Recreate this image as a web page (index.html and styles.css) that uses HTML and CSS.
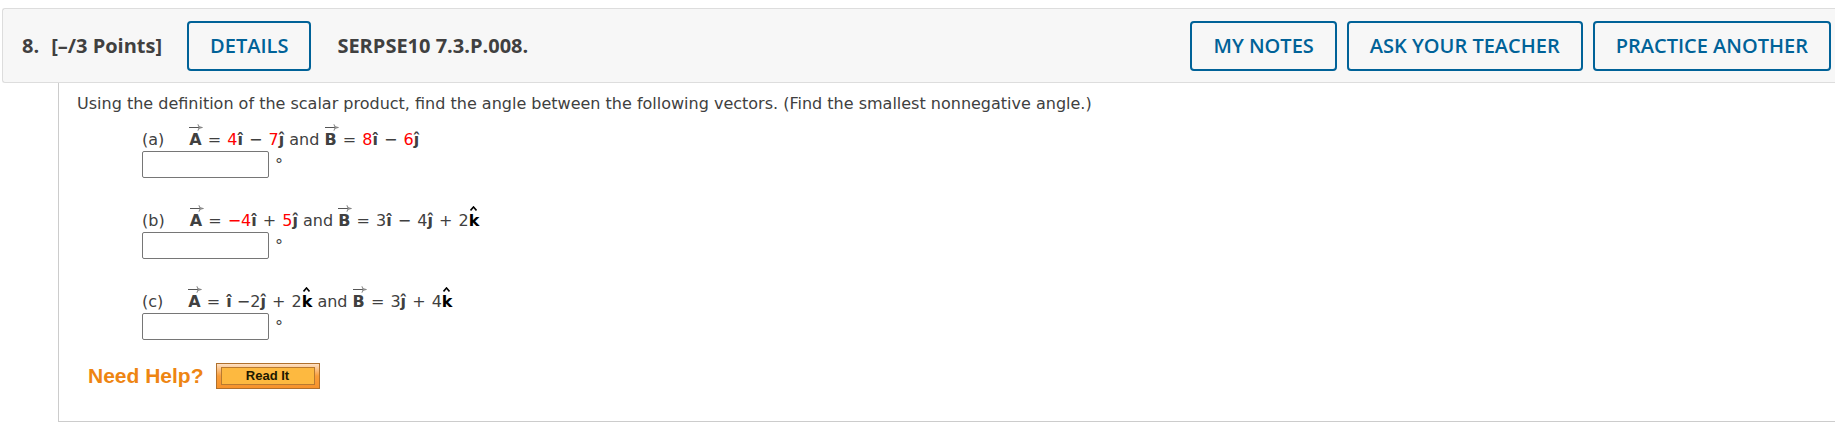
FILE: index.html
```
<!DOCTYPE html>
<html lang="en">
<head>
    <meta charset="UTF-8">
    <meta name="viewport" content="width=device-width, initial-scale=1.0">
    <title>SERPSE10 7.3.P.008.</title>
    <link rel="stylesheet" href="styles.css">
</head>
<body>
    <svg class="symbols" aria-hidden="true">
        <symbol id="arrow" viewBox="0 0 14 7">
            <path d="M0 3.5H13" fill="none" stroke="#555" stroke-width="1"/>
            <path d="M9 0.5C9.5 2 11 3.2 13.5 3.5C11 3.8 9.5 5 9 6.5L10 3.5Z" fill="#999" stroke="#888" stroke-width="0.8"/>
        </symbol>
        <symbol id="hat" viewBox="0 0 7 5">
            <path d="M0.5 4.5L3.5 1L6.5 4.5" fill="none" stroke="#000" stroke-width="1.6"/>
        </symbol>
    </svg>

    <div class="question">
        <header class="header">
            <h2 class="title"><span>8.</span> <span>[–/3 Points]</span></h2>
            <button type="button" class="btn">DETAILS</button>
            <h2 class="title code">SERPSE10 7.3.P.008.</h2>
            <div class="actions">
                <button type="button" class="btn">MY NOTES</button>
                <button type="button" class="btn">ASK YOUR TEACHER</button>
                <button type="button" class="btn">PRACTICE ANOTHER</button>
            </div>
        </header>

        <main class="content">
            <p class="prompt">Using the definition of the scalar product, find the angle between the following vectors. (Find the smallest nonnegative angle.)</p>

            <div class="parts">
                <div class="part">
                    <label for="part-a"><span class="letter">(a)</span><b class="vec">A<svg><use href="#arrow"/></svg></b> <span class="op">=</span> <span class="red">4</span><b>î</b> <span class="op">−</span> <span class="red">7</span><b>ĵ</b> and <b class="vec">B<svg><use href="#arrow"/></svg></b> <span class="op">=</span> <span class="red">8</span><b>î</b> <span class="op">−</span> <span class="red">6</span><b>ĵ</b></label>
                    <div class="answer"><input type="text" id="part-a"><span class="degree">°</span></div>
                </div>
                <div class="part">
                    <label for="part-b"><span class="letter">(b)</span><b class="vec">A<svg><use href="#arrow"/></svg></b> <span class="op">=</span> <span class="red">−4</span><b>î</b> <span class="op">+</span> <span class="red">5</span><b>ĵ</b> and <b class="vec">B<svg><use href="#arrow"/></svg></b> <span class="op">=</span> 3<b>î</b> <span class="op">−</span> 4<b>ĵ</b> <span class="op">+</span> 2<b class="unit">k<svg><use href="#hat"/></svg></b></label>
                    <div class="answer"><input type="text" id="part-b"><span class="degree">°</span></div>
                </div>
                <div class="part">
                    <label for="part-c"><span class="letter">(c)</span><b class="vec">A<svg><use href="#arrow"/></svg></b> <span class="op">=</span> <b>î</b> −2<b>ĵ</b> <span class="op">+</span> 2<b class="unit">k<svg><use href="#hat"/></svg></b> and <b class="vec">B<svg><use href="#arrow"/></svg></b> <span class="op">=</span> 3<b>ĵ</b> <span class="op">+</span> 4<b class="unit">k<svg><use href="#hat"/></svg></b></label>
                    <div class="answer"><input type="text" id="part-c"><span class="degree">°</span></div>
                </div>
            </div>

            <div class="help">
                <span class="help-label">Need Help?</span>
                <button type="button" class="read-btn"><span>Read It</span></button>
            </div>
        </main>
    </div>
</body>
</html>
```
FILE: styles.css
```
* {
    box-sizing: border-box;
}
body {
    margin: 0;
    background: #fff;
    color: #404040;
    font-family: Verdana, "DejaVu Sans", sans-serif;
    font-size: 16px;
    overflow-x: hidden;
}
.symbols {
    display: none;
}
.question {
    padding: 8px 0 0 2px;
}
.header {
    display: flex;
    align-items: center;
    padding: 12px 4px 11px 19px;
    background: #f7f7f7;
    border: 1px solid #ddd;
    border-right: none;
    border-radius: 3px 0 0 3px;
    font-family: "Open Sans", sans-serif;
}
.title {
    display: flex;
    gap: 12px;
    margin: 0 25px 0 0;
    font-size: 20px;
    font-weight: 700;
    line-height: 24px;
}
.code {
    margin: 0 0 0 26px;
}
.btn {
    padding: 11px 21px;
    background: transparent;
    border: 2px solid #006298;
    border-radius: 4px;
    color: #006298;
    font-family: inherit;
    font-size: 20px;
    font-weight: 600;
    line-height: 24px;
    cursor: pointer;
}
.btn:hover {
    background: #e6f0f5;
}
.actions {
    display: flex;
    gap: 10px;
    margin-left: auto;
}
.content {
    margin-left: 56px;
    padding: 11px 18px 32px;
    border-left: 1px solid #ccc;
    border-bottom: 1px solid #ccc;
}
.prompt {
    margin: 0 0 16px;
    line-height: 20px;
}
.parts {
    display: grid;
    gap: 33px;
    margin-left: 65px;
}
.part label {
    display: block;
    padding-bottom: 1px;
    line-height: 20px;
}
.letter {
    margin-right: 25px;
}
.op {
    margin: 0 1px;
}
.vec,
.unit {
    position: relative;
}
.vec svg {
    position: absolute;
    left: 0;
    top: -6px;
    width: 14px;
    height: 7px;
}
.unit {
    color: #000;
}
.unit svg {
    position: absolute;
    left: 1px;
    top: -5px;
    width: 7px;
    height: 5px;
}
.red {
    color: #f00;
}
.answer {
    display: flex;
    gap: 6px;
}
.answer input {
    width: 127px;
    height: 27px;
    padding: 1px 2px;
    background: #fff;
    border: 1px solid #767676;
    border-radius: 2px;
    font-size: 16px;
}
.degree {
    line-height: 27px;
}
.help {
    display: flex;
    align-items: center;
    gap: 12px;
    margin: 23px 0 0 11px;
}
.help-label {
    color: #ee8512;
    font-family: "Liberation Sans", Arial, sans-serif;
    font-size: 21px;
    font-weight: bold;
    line-height: 24px;
}
.read-btn {
    width: 104px;
    height: 26px;
    padding: 3px 4px;
    background: linear-gradient(#fde0c4, #f99d39 50%, #f7932b);
    border: 1px solid #b0702c;
    cursor: pointer;
}
.read-btn span {
    display: block;
    background: #fdb940;
    border: 1px solid #b87a30;
    color: #201800;
    font-family: "Liberation Sans", Arial, sans-serif;
    font-size: 13px;
    font-weight: bold;
    line-height: 16px;
}
```
